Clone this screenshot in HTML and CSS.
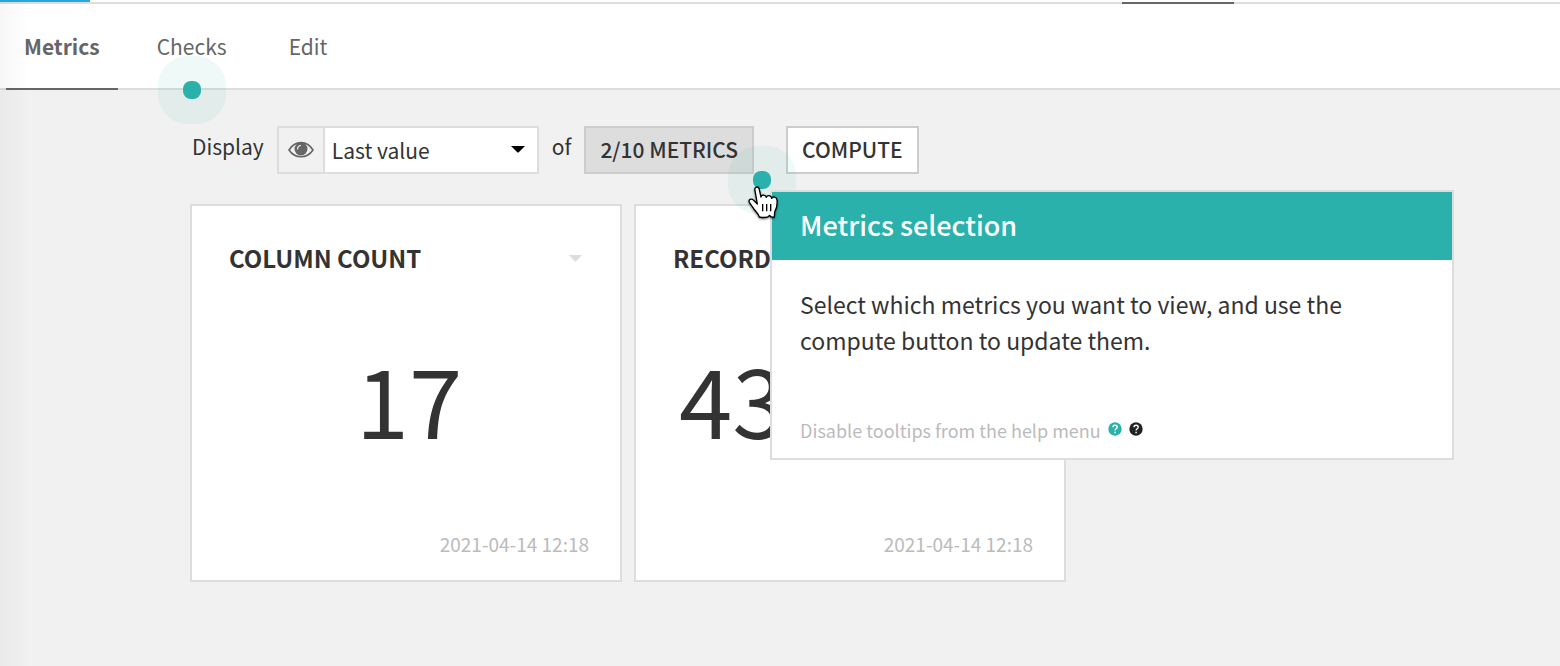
FILE: index.html
```html
<!DOCTYPE html>
<html lang="en">
<head>
<meta charset="utf-8">
<title>Metrics</title>
<link rel="stylesheet" href="styles.css">
</head>
<body>
<div class="topline"><span class="topline-blue"></span><span class="topline-dark"></span></div>
<nav class="tabs">
  <a class="tab tab-active" href="#metrics">Metrics</a>
  <a class="tab" href="#checks">Checks<span class="beacon beacon-checks"></span></a>
  <a class="tab" href="#edit">Edit</a>
</nav>
<main class="main">
  <div class="toolbar">
    <label class="label" for="display">Display</label>
    <div class="picker">
      <span class="picker-icon">
        <svg width="26" height="18" viewBox="0 0 26 18" aria-hidden="true">
          <path d="M1 9C7-0.800 19-0.800 25 9C19 18 7 18 1 9Z" fill="none" stroke="#666" stroke-width="1.600"/>
          <circle cx="13" cy="8" r="6.500" fill="#666"/>
          <path d="M9.500 8.500C9.500 6 11 4.600 13 4.500" fill="none" stroke="#f1f1f1" stroke-width="1.200"/>
        </svg>
      </span>
      <select class="picker-select" id="display"><option>Last value</option></select>
      <svg class="picker-arrow" width="14" height="7" viewBox="0 0 14 7" aria-hidden="true"><path d="M0 0H14L8 6Q7 7 6 6Z" fill="#000"/></svg>
    </div>
    <span class="label">of</span>
    <div class="anchor">
      <button class="btn btn-pressed" type="button">2/10 METRICS</button>
      <span class="beacon beacon-metrics"></span>
      <section class="tooltip">
        <h2 class="tooltip-title">Metrics selection</h2>
        <p class="tooltip-text">Select which metrics you want to view, and use the compute button to update them.</p>
        <p class="tooltip-foot">Disable tooltips from the help menu
          <svg class="help help-teal" viewBox="0 0 14 14" aria-hidden="true"><circle cx="7" cy="7" r="6.700"/><path d="M5 5.200C5 2.600 9.200 2.600 9.200 5.200C9.200 6.700 7.100 6.700 7.100 8.400M7.100 9.700V11.200"/></svg>
          <svg class="help" viewBox="0 0 14 14" aria-hidden="true"><circle cx="7" cy="7" r="6.700"/><path d="M5 5.200C5 2.600 9.200 2.600 9.200 5.200C9.200 6.700 7.100 6.700 7.100 8.400M7.100 9.700V11.200"/></svg>
        </p>
      </section>
      <svg class="cursor" viewBox="21 75 99 105" aria-hidden="true">
        <path d="M45 92C42 78 56 78 58 89L63 111C64 103 77 103 79 112C82 104 94 106 95 115C99 108 110 111 111 120C113 137 109 147 104 156L103 171C96 173 93 172 89 166C84 174 74 174 58 171C55 160 45 153 41 146L28 127C24 118 35 114 41 121L52 132Z" fill="#fff" stroke="#000" stroke-width="4" stroke-linejoin="round"/>
        <path d="M68 132V154M80 132V154M92 132V154" fill="none" stroke="#000" stroke-width="4"/>
      </svg>
    </div>
    <button class="btn" type="button">COMPUTE</button>
  </div>
  <div class="cards">
    <article class="card">
      <header class="card-head">
        <h3 class="card-title">COLUMN COUNT</h3>
        <svg width="13" height="7" viewBox="0 0 13 7" aria-hidden="true"><path d="M0 0H13L7 6.500H6Z" fill="#ddd"/></svg>
      </header>
      <div class="card-value">17</div>
      <time class="card-date">2021-04-14 12:18</time>
    </article>
    <article class="card">
      <header class="card-head"><h3 class="card-title">RECORD COUNT</h3></header>
      <div class="card-value card-value-start">43</div>
      <time class="card-date">2021-04-14 12:18</time>
    </article>
  </div>
</main>
<div class="edge"></div>
</body>
</html>
```
FILE: styles.css
```css
* { box-sizing: border-box; }
body {
  margin: 0;
  min-height: 100vh;
  position: relative;
  overflow-x: hidden;
  background: #f1f1f1;
  color: #333;
  font: 400 21px/36px "Noto Sans CJK SC", "Noto Sans", sans-serif;
}
.topline {
  display: flex;
  justify-content: space-between;
  height: 4px;
  background: #fff;
  border-bottom: 2px solid #ddd;
}
.topline-blue { width: 90px; height: 2px; background: #28a9dd; }
.topline-dark { width: 112px; height: 2px; margin: 2px 326px 0 0; background: #666; }
.tabs {
  display: flex;
  gap: 16px;
  height: 86px;
  padding-left: 6px;
  background: #fff;
  border-bottom: 2px solid #ddd;
}
.tab {
  position: relative;
  height: 86px;
  padding: 0 23px;
  line-height: 84px;
  color: #666;
  text-decoration: none;
}
.tab-active { padding: 0 18px; font-weight: 700; border-bottom: 2px solid #666; }
.beacon {
  position: absolute;
  width: 68px;
  height: 68px;
  border-radius: 30px;
  background: rgba(43, 177, 172, 0.08);
}
.beacon::after {
  content: "";
  position: absolute;
  inset: 25px;
  border-radius: 8px;
  background: #2bb1ac;
}
.beacon-checks { left: 24px; bottom: -34px; }
.beacon-metrics { right: -42px; bottom: -40px; }
.main { padding: 36px 190px; }
.toolbar { display: flex; gap: 13px; padding-left: 2px; }
.label { line-height: 40px; }
.picker {
  position: relative;
  display: flex;
  width: 262px;
  height: 48px;
  border: 2px solid #ddd;
  background: #fff;
}
.picker-icon {
  display: flex;
  align-items: center;
  justify-content: center;
  width: 46px;
  background: #f1f1f1;
  border-right: 2px solid #ddd;
}
.picker-select {
  flex: 1;
  appearance: none;
  padding: 0 7px;
  border: 0;
  background: transparent;
  color: inherit;
  font: inherit;
}
.picker-arrow { position: absolute; right: 12px; top: 18px; pointer-events: none; }
.anchor { position: relative; margin-right: 19px; }
.btn {
  height: 48px;
  padding: 0 14px 3px;
  border: 2px solid #ccc;
  background: #fff;
  color: #333;
  font: inherit;
  font-weight: 500;
}
.btn-pressed { background: #ddd; }
.tooltip {
  position: absolute;
  z-index: 2;
  left: calc(100% + 16px);
  top: 64px;
  width: 684px;
  border: 2px solid #ddd;
  background: #fff;
}
.tooltip-title {
  margin: 0;
  padding: 0 28px 2px;
  background: #2bb1ac;
  color: #fff;
  font-size: 27px;
  font-weight: 500;
  line-height: 66px;
}
.tooltip-text { margin: 0; padding: 26px 80px 58px 28px; font-size: 23px; }
.tooltip-foot {
  display: flex;
  align-items: center;
  gap: 7px;
  margin: 0;
  padding: 0 28px 14px;
  color: #bbb;
  font-size: 18px;
  line-height: 28px;
}
.help { width: 14px; height: 14px; margin-bottom: 2px; }
.help circle { fill: #222; }
.help-teal circle { fill: #2bb1ac; }
.help path { fill: none; stroke: #fff; stroke-width: 1.4px; }
.cursor {
  position: absolute;
  z-index: 3;
  right: -26px;
  top: 59px;
  width: 33px;
  height: 35px;
  filter: drop-shadow(0 1px 1px rgba(0, 0, 0, 0.5));
}
.cards { display: flex; gap: 12px; margin-top: 30px; }
.card {
  display: flex;
  flex-direction: column;
  width: 432px;
  padding: 36px 31px 22px 37px;
  border: 2px solid #ddd;
  background: #fff;
}
.card-head {
  display: flex;
  align-items: center;
  justify-content: space-between;
  padding-right: 7px;
}
.card-title { margin: 0; font-size: 24px; font-weight: 700; line-height: 32px; }
.card-value { margin: 76px 0 84px; font-size: 96px; line-height: 96px; text-align: center; }
.card-value-start { padding-left: 6px; text-align: left; }
.card-date { color: #bbb; font-size: 19px; line-height: 28px; text-align: right; }
.edge {
  position: absolute;
  inset: 0 auto 0 0;
  width: 30px;
  background: linear-gradient(90deg, rgba(0, 0, 0, 0.03), transparent);
  pointer-events: none;
}
```
